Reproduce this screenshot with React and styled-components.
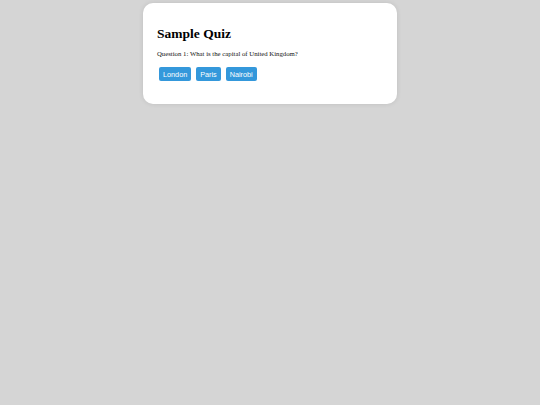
import styled, { createGlobalStyle } from "styled-components";

const GlobalStyle = createGlobalStyle`
  html, body {
    margin: 0;
    background: #d5d5d5;
    font-family: "Liberation Serif", "Times New Roman", serif;
  }
`;

const Page = styled.div`
  min-height: 405px;
  padding-top: 3px;
  box-sizing: border-box;
`;

const Card = styled.div`
  width: 254px;
  margin: 0 auto;
  box-sizing: border-box;
  padding: 10px 14px 23px;
  background: #fff;
  border-radius: 10px;
  box-shadow: 0 0 5px rgba(0, 0, 0, 0.1);
`;

const Title = styled.h1`
  font-size: 13.5px;
  margin: 13px 0 7.5px;
  color: #000;
`;

const Question = styled.p`
  font-size: 6.75px;
  font-weight: normal;
  margin: 0 0 10.5px;
  color: #111;
`;

const Options = styled.div`
  display: flex;
  gap: 5px;
  padding-left: 2px;
`;

const OptionButton = styled.button`
  height: 14px;
  padding: 0 4px;
  border: none;
  border-radius: 2px;
  background: #3498db;
  color: #fff;
  font-family: "Liberation Sans", Arial, sans-serif;
  font-size: 7.25px;
  cursor: pointer;
`;

const options = ["London", "Paris", "Nairobi"];

const App = () => {
  return (
    <Page>
      <GlobalStyle />
      <Card>
        <Title>Sample Quiz</Title>
        <Question>Question 1: What is the capital of United Kingdom?</Question>
        <Options>
          {options.map((o) => (
            <OptionButton key={o}>{o}</OptionButton>
          ))}
        </Options>
      </Card>
    </Page>
  );
};

export default App;
